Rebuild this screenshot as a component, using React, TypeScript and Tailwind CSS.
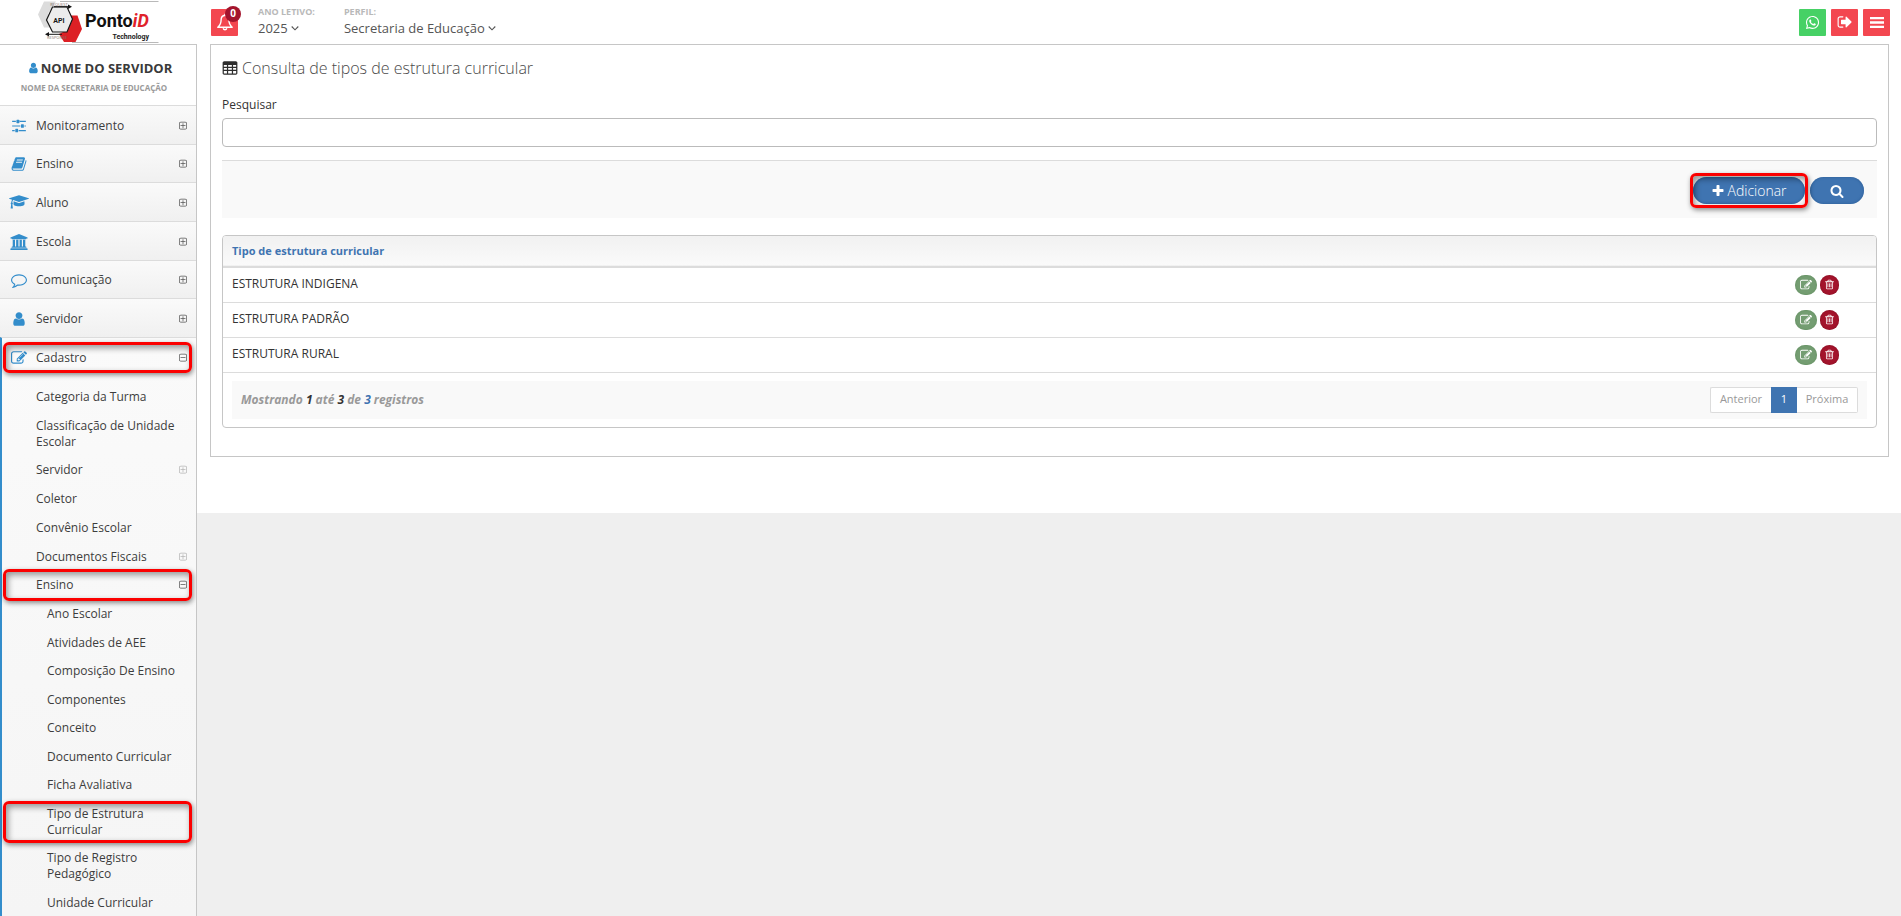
import { useState, type ReactNode } from "react";
import { FaWhatsapp } from "react-icons/fa";

const ICONS = {
  plusSquare: "M1344 800v64q0 14-9 23t-23 9h-352v352q0 14-9 23t-23 9h-64q-14 0-23-9t-9-23v-352h-352q-14 0-23-9t-9-23v-64q0-14 9-23t23-9h352v-352q0-14 9-23t23-9h64q14 0 23 9t9 23v352h352q14 0 23 9t9 23zm128 448v-832q0-66-47-113t-113-47h-832q-66 0-113 47t-47 113v832q0 66 47 113t113 47h832q66 0 113-47t47-113zm128-832v832q0 119-84.500 203.500t-203.500 84.500h-832q-119 0-203.500-84.500t-84.500-203.500v-832q0-119 84.500-203.500t203.500-84.500h832q119 0 203.500 84.500t84.500 203.500z",
  minusSquare: "M1344 800v64q0 14-9 23t-23 9h-832q-14 0-23-9t-9-23v-64q0-14 9-23t23-9h832q14 0 23 9t9 23zm128 448v-832q0-66-47-113t-113-47h-832q-66 0-113 47t-47 113v832q0 66 47 113t113 47h832q66 0 113-47t47-113zm128-832v832q0 119-84.500 203.500t-203.500 84.500h-832q-119 0-203.500-84.500t-84.500-203.500v-832q0-119 84.500-203.500t203.500-84.500h832q119 0 203.500 84.500t84.500 203.500z",
  user: "M1536 1399q0 109-62.500 187t-150.500 78h-854q-88 0-150.500-78t-62.500-187q0-85 8.500-160.500t31.500-152 58.500-131 94-89 134.500-34.500q131 128 313 128t313-128q76 0 134.500 34.500t94 89 58.500 131 31.500 152 8.500 160.500zm-256-887q0 159-112.500 271.500t-271.500 112.500-271.500-112.500-112.500-271.500 112.500-271.500 271.500-112.500 271.500 112.500 112.500 271.500z",
  edit: "M888 1184l116-116-152-152-116 116v56h96v96h56zm440-720q-16-16-33 1l-350 350q-17 17-1 33t33-1l350-350q17-17 1-33zm80 594v190q0 119-84.500 203.500t-203.500 84.500h-832q-119 0-203.500-84.500t-84.500-203.500v-832q0-119 84.500-203.500t203.500-84.500h832q63 0 117 25 15 7 18 23 3 17-9 29l-49 49q-14 14-32 8-23-6-45-6h-832q-66 0-113 47t-47 113v832q0 66 47 113t113 47h832q66 0 113-47t47-113v-126q0-13 9-22l64-64q15-15 35-7t20 29zm-96-738l288 288-672 672h-288v-288zm444 132l-92 92-288-288 92-92q28-28 68-28t68 28l152 152q28 28 28 68t-28 68z",
  trash: "M704 736v576q0 14-9 23t-23 9h-64q-14 0-23-9t-9-23v-576q0-14 9-23t23-9h64q14 0 23 9t9 23zm256 0v576q0 14-9 23t-23 9h-64q-14 0-23-9t-9-23v-576q0-14 9-23t23-9h64q14 0 23 9t9 23zm256 0v576q0 14-9 23t-23 9h-64q-14 0-23-9t-9-23v-576q0-14 9-23t23-9h64q14 0 23 9t9 23zm128 724v-948h-896v948q0 22 7 40.500t14.500 27 10.500 8.500h832q3 0 10.500-8.500t14.500-27 7-40.500zm-672-1076h448l-48-117q-7-9-17-11h-317q-10 2-17 11zm928 32v64q0 14-9 23t-23 9h-96v948q0 83-47 143.500t-113 60.500h-832q-66 0-113-58.500t-47-141.500v-952h-96q-14 0-23-9t-9-23v-64q0-14 9-23t23-9h309l70-167q15-37 54-63t79-26h320q40 0 79 26t54 63l70 167h309q14 0 23 9t9 23z",
  search: "M1216 832q0-185-131.500-316.500t-316.500-131.500-316.500 131.500-131.500 316.500 131.500 316.500 316.500 131.500 316.500-131.500 131.500-316.500zm512 832q0 52-38 90t-90 38q-54 0-90-38l-343-342q-179 124-399 124-143 0-273.500-55.500t-225-150-150-225-55.500-273.500 55.500-273.500 150-225 225-150 273.500-55.500 273.500 55.500 225 150 150 225 55.500 273.500q0 220-124 399l343 343q37 37 37 90z",
  plus: "M1600 736v192q0 40-28 68t-68 28h-416v416q0 40-28 68t-68 28h-192q-40 0-68-28t-28-68v-416h-416q-40 0-68-28t-28-68v-192q0-40 28-68t68-28h416v-416q0-40 28-68t68-28h192q40 0 68 28t28 68v416h416q40 0 68 28t28 68z",
  cap: "M1774 708l18 316q4 69-82 128t-235 93.500-323 34.500-323-34.500-235-93.500-82-128l18-316 574 181q22 7 48 7t48-7zm530-324q0 23-22 31l-1120 352q-4 1-10 1t-10-1l-652-206q-43 34-71 111.500t-34 178.500q63 36 63 109 0 69-58 107l58 433q2 14-8 25-9 11-24 11h-192q-15 0-24-11-10-11-8-25l58-433q-58-38-58-107 0-73 65-111 11-207 98-330l-333-104q-22-8-22-31t22-31l1120-352q4-1 10-1t10 1l1120 352q22 8 22 31z",
  exit: "M704 1440q0 4 1 20t.5 26.500-3 23.500-10 19.500-20.500 6.500h-320q-119 0-203.500-84.500t-84.500-203.500v-704q0-119 84.500-203.500t203.500-84.500h320q13 0 22.500 9.500t9.500 22.500q0 4 1 20t.5 26.500-3 23.500-10 19.500-20.500 6.500h-320q-66 0-113 47t-47 113v704q0 66 47 113t113 47h312l11.500 1 11.500 3 8 5.500 7 9 2 13.500zm928-544q0 26-19 45l-544 544q-19 19-45 19t-45-19-19-45v-288h-448q-26 0-45-19t-19-45v-384q0-26 19-45t45-19h448v-288q0-26 19-45t45-19 45 19l544 544q19 19 19 45z",
  comment: "M896 384q-204 0-381.500 69.500t-282 187.500-104.500 255q0 112 71.500 213.500t201.500 175.500l87 50-27 96q-24 91-70 172 152-63 275-171l43-38 57 6q69 8 130 8 204 0 381.500-69.500t282-187.500 104.500-255-104.500-255-282-187.500-381.500-69.500zm896 512q0 174-120 321.500t-326 233-450 85.500q-70 0-145-8-198 175-460 242-49 14-114 22h-5q-15 0-27-10.500t-16-27.500v-1q-3-4-.5-12t2-10 4.500-9.500l6-9 7-8.500 8-9q7-8 31-34.500t34.500-38 31-39.500 32.500-51 27-59 26-76q-157-89-247.500-220t-90.500-281q0-174 120-321.500t326-233 450-85.500 450 85.500 326 233 120 321.500z",
  book: "M1703 478q40 57 18 129l-275 906q-19 64-76.500 107.500t-122.500 43.500h-923q-77 0-148.500-53.500t-99.500-131.500q-24-67-2-127 0-4 3-27t4-37q1-8-3-21.500t-3-19.500q2-11 8-21t16.500-23.500 16.500-23.500q23-38 45-91.500t30-91.500q3-10 .5-30t-.5-28q3-11 17-28t17-23q21-36 42-92t25-90q1-9-2.500-32t.5-28q4-13 22-30.500t22-22.500q19-26 42.500-84.500t27.500-96.500q1-8-3-25.500t-2-26.500q2-8 9-18t18-23 17-21q8-12 16.500-30.500t15-35 16-36 19.500-32 26.500-23.500 36-11.500 47.500 5.500l-1 3q38-9 51-9h761q74 0 114 56t18 130l-274 906q-36 119-71.500 153.500t-128.500 34.500h-869q-27 0-38 15-11 16-1 43 24 70 144 70h923q29 0 56-15.500t35-41.500l300-987q7-22 5-57 38 15 59 43zm-1064 2q-4 13 2 22.500t20 9.500h608q13 0 25.500-9.500t16.500-22.500l21-64q4-13-2-22.500t-20-9.500h-608q-13 0-25.500 9.500t-16.500 22.500zm-83 256q-4 13 2 22.500t20 9.500h608q13 0 25.500-9.500t16.500-22.500l21-64q4-13-2-22.500t-20-9.500h-608q-13 0-25.500 9.500t-16.500 22.500z",
  university: "M960 0l960 384v128h-128q0 26-20.500 45t-48.500 19h-1526q-28 0-48.500-19t-20.500-45h-128v-128zm-704 640h256v768h128v-768h256v768h128v-768h256v768h128v-768h256v768h59q28 0 48.500 19t20.500 45v64h-1664v-64q0-26 20.500-45t48.500-19h59v-768zm1595 960q28 0 48.500 19t20.500 45v128h-1920v-128q0-26 20.500-45t48.500-19h1782z",
  sliders: "M128 320h416v128h-416zM704 256h256v256h-256v-256zM608 256q0-64 64-64h192q64 0 64 64v256q0 64-64 64h-192q-64 0-64-64zM992 320h672v128h-672zM128 832h928v128h-928zM1120 768q0-64 64-64h192q64 0 64 64v256q0 64-64 64h-192q-64 0-64-64zM1504 832h160v128h-160zM128 1344h288v128h-288zM480 1280q0-64 64-64h192q64 0 64 64v256q0 64-64 64h-192q-64 0-64-64zM864 1344h800v128h-800z",
  table: "M288 128h1216q66 0 113 47t47 113v1088q0 66-47 113t-113 47h-1216q-66 0-113-47t-47-113v-1088q0-66 47-113t113-47zM256 512v192h320v-192zM704 512v192h384v-192zM1216 512v192h320v-192zM256 832v192h320v-192zM704 832v192h384v-192zM1216 832v192h320v-192zM256 1152v256h320v-256zM704 1152v256h384v-256zM1216 1152v256h320v-256z",
};

type IconName = keyof typeof ICONS;

function Icon({ name, className, box = "0 0 1792 1792" }: { name: IconName; className: string; box?: string }) {
  return (
    <svg
      viewBox={box}
      className={`shrink-0 ${className}`}
      fill="currentColor"
      fillRule={name === "sliders" ? "nonzero" : "evenodd"}
      aria-hidden="true"
    >
      <path d={ICONS[name]} />
    </svg>
  );
}

function BellIcon() {
  return (
    <svg viewBox="0 0 18 18" className="size-[18px]" fill="none" stroke="currentColor" strokeWidth="1.4" strokeLinejoin="round" aria-hidden="true">
      <path d="M9 2.300c-2.600.3-3.900 2.200-3.900 4.700 0 3.400-1.200 5.500-3.300 7.200h14.400c-2.100-1.700-3.300-3.800-3.300-7.200 0-2.500-1.300-4.400-3.900-4.700z" />
      <path d="M9 .8v1.400M7.200 15.200c.3 1 .9 1.500 1.800 1.500s1.500-.5 1.800-1.500" />
    </svg>
  );
}

function AngleDown() {
  return (
    <svg viewBox="0 0 8 8" className="size-2" fill="none" stroke="currentColor" strokeWidth="1.100" aria-hidden="true">
      <path d="M.7 2.500L4 5.800l3.300-3.300" />
    </svg>
  );
}

function Logo() {
  return (
    <svg viewBox="0 0 122 44" className="h-11 w-[122px]" role="img" aria-label="PontoiD Technology">
      <path d="M22 1.500h98.500M34 42.500h86.500" stroke="#b9b9b9" strokeWidth="1" />
      <path d="M6 1.500h12l-8 12 8 12-3 2H6L0 14.500z" fill="#dcdcdc" />
      <path d="M32 15.500h7.500L44 29l-6.500 13H26l-5-8 4-2 4-1.500 5-10z" fill="#dd2025" />
      <path d="M14.500 7h14.500l5.500 12-5.500 13H14.500L8.500 20z" fill="#ececec" stroke="#161616" strokeWidth="1.200" />
      <path d="M16 6.700h14M10 34.300h14" stroke="#161616" strokeWidth="1" />
      <path d="M30 4.500l4 2.200-4 2.200zM11 32l-4 2.300 4 2.200z" fill="#161616" />
      <text x="21" y="22.500" textAnchor="middle" fontSize="7" fontWeight="700" fill="#161616" className="font-[Roboto,sans-serif]">API</text>
      <text x="21" y="5.500" textAnchor="middle" fontSize="4" fill="#85726a" className="font-['Open_Sans',sans-serif]">REQUEST</text>
      <text x="19" y="38.500" textAnchor="middle" fontSize="4" fill="#85726a" className="font-['Open_Sans',sans-serif]">RESPONSE</text>
      <text x="47" y="27" fontSize="18" fontWeight="700" fill="#111" className="font-[Roboto,sans-serif]">
        Ponto<tspan fill="#e0222a" fontStyle="italic">iD</tspan>
      </text>
      <text x="111" y="39" textAnchor="end" fontSize="7" fontWeight="700" fill="#222" className="font-[Roboto,sans-serif]">Technology</text>
    </svg>
  );
}

/* Red frame drawn over an item to call attention to it */
function Highlight({ className }: { className: string }) {
  return (
    <span
      aria-hidden="true"
      className={`pointer-events-none absolute z-10 rounded-[6px] border-3 border-[#fb0000] shadow-[1px_2px_5px_rgba(0,0,0,0.45),inset_2px_3px_6px_rgba(0,0,0,0.4)] ${className}`}
    />
  );
}

const SECTIONS: { label: string; icon: IconName; iconClass: string; box?: string }[] = [
  { label: "Monitoramento", icon: "sliders", iconClass: "size-4" },
  { label: "Ensino", icon: "book", iconClass: "size-4" },
  { label: "Aluno", icon: "cap", iconClass: "h-4 w-5", box: "0 0 2304 1792" },
  { label: "Escola", icon: "university", iconClass: "h-4 w-[18px]", box: "0 0 1920 1792" },
  { label: "Comunicação", icon: "comment", iconClass: "size-4" },
  { label: "Servidor", icon: "user", iconClass: "size-4" },
];

const CADASTRO = [
  { label: "Categoria da Turma" },
  { label: "Classificação de Unidade Escolar" },
  { label: "Servidor", more: true },
  { label: "Coletor" },
  { label: "Convênio Escolar" },
  { label: "Documentos Fiscais", more: true },
];

const ENSINO = [
  "Ano Escolar",
  "Atividades de AEE",
  "Composição De Ensino",
  "Componentes",
  "Conceito",
  "Documento Curricular",
  "Ficha Avaliativa",
  "Tipo de Estrutura Curricular",
  "Tipo de Registro Pedagógico",
  "Unidade Curricular",
];

function Sidebar() {
  return (
    <aside className="flex w-[197px] shrink-0 flex-col overflow-hidden border-t border-r border-[#c6c6c6] bg-[#f7f7f7] text-[12px] text-[#3d3d3d]">
      <div className="flex h-[60px] shrink-0 flex-col items-center justify-center gap-1 bg-white pt-[6px]">
        <p className="flex items-center gap-[3px] pl-1 text-[13px] leading-4 font-bold text-[#3a3a3a]">
          <Icon name="user" className="h-3 w-[10px] text-[#338dcb]" box="128 0 1408 1792" />
          NOME DO SERVIDOR
        </p>
        <p className="pr-2 text-[8px] leading-4 font-bold text-[#9a9a9a]">NOME DA SECRETARIA DE EDUCAÇÃO</p>
      </div>
      <nav>
        <ul className="grid min-h-[232px] auto-rows-fr">
          {SECTIONS.map((s) => (
            <li key={s.label} className="border-t border-[#dcdcdc] bg-linear-to-b from-[#fafafa] to-[#f0f0f0]">
              <a href="#" className="flex h-full items-center pt-[2px] pr-2">
                <span className="flex w-9 items-center justify-center pl-[2px] text-[#338dcb]">
                  <Icon name={s.icon} className={s.iconClass} box={s.box} />
                </span>
                <span className="grow">{s.label}</span>
                <Icon name="plusSquare" className="size-[10px] text-[#555]" />
              </a>
            </li>
          ))}
        </ul>
        <div className="border-t border-l-2 border-t-[#dcdcdc] border-l-[#338dcb] bg-linear-to-b from-[#fafafa] to-[#f5f5f5]">
          <a href="#" className="relative flex h-[39px] items-center pr-2">
            <span className="flex w-[34px] items-center justify-center pr-px text-[#338dcb]">
              <Icon name="edit" className="size-4" />
            </span>
            <span className="grow">Cadastro</span>
            <Icon name="minusSquare" className="size-[10px] text-[#555]" />
            <Highlight className="top-1 right-1 bottom-1 left-px" />
          </a>
          <ul className="flex min-h-[223px] flex-col pt-[6px] leading-4">
            {CADASTRO.map((c) => (
              <li key={c.label} className="grow">
                <a href="#" className="flex items-center py-[6px] pr-2 pl-[34px]">
                  <span className="grow">{c.label}</span>
                  {c.more && <Icon name="plusSquare" className="size-[10px] text-[#b5b5b5]" />}
                </a>
              </li>
            ))}
            <li className="grow">
              <a href="#" className="relative flex items-center py-[6px] pr-2 pl-[34px]">
                <span className="grow">Ensino</span>
                <Icon name="minusSquare" className="size-[10px] text-[#555]" />
                <Highlight className="-inset-y-[2px] right-1 left-px" />
              </a>
            </li>
          </ul>
          <ul className="flex min-h-[317px] flex-col leading-4">
            {ENSINO.map((label) => (
              <li key={label} className="grow">
                <a href="#" className="relative flex py-[6px] pr-4 pl-[45px]">
                  {label}
                  {label === "Tipo de Estrutura Curricular" && <Highlight className="inset-y-[1px] right-1 left-px" />}
                </a>
              </li>
            ))}
          </ul>
        </div>
      </nav>
    </aside>
  );
}

function HeaderMenu({ label, value }: { label: string; value: string }) {
  return (
    <div>
      <p className="text-[9px] leading-4 font-bold text-[#b9b9b9]">{label}</p>
      <button type="button" className="flex items-center gap-[3px] text-[13px] leading-4 text-[#555]">
        {value}
        <AngleDown />
      </button>
    </div>
  );
}

function SquareButton({ label, className, children }: { label: string; className: string; children: ReactNode }) {
  return (
    <button type="button" aria-label={label} className={`flex size-[27px] items-center justify-center rounded-[1px] text-white ${className}`}>
      {children}
    </button>
  );
}

function Header() {
  return (
    <header className="flex h-11 shrink-0 items-center bg-white pr-[11px]">
      <div className="flex w-[197px] shrink-0 justify-center">
        <Logo />
      </div>
      <div className="relative ml-[14px]">
        <SquareButton label="Notificações" className="bg-[#f34750]">
          <BellIcon />
        </SquareButton>
        <span className="absolute -top-[3px] -right-[3px] flex size-4 items-center justify-center rounded-full bg-[#a3142c] text-[10px] font-bold text-white">0</span>
      </div>
      <div className="ml-5 flex gap-[29px] pb-1">
        <HeaderMenu label="ANO LETIVO:" value="2025" />
        <HeaderMenu label="PERFIL:" value="Secretaria de Educação" />
      </div>
      <div className="ml-auto flex gap-[5px]">
        <SquareButton label="WhatsApp" className="bg-[#46d165]">
          <FaWhatsapp className="size-[15px]" />
        </SquareButton>
        <SquareButton label="Sair" className="bg-[#f34750]">
          <Icon name="exit" className="size-4" />
        </SquareButton>
        <SquareButton label="Menu" className="bg-[#f34750]">
          <svg viewBox="0 0 14 11" className="h-[11px] w-[14px]" fill="currentColor" aria-hidden="true">
            <path d="M0 0h14v2.300H0zM0 4.350h14v2.300H0zM0 8.700h14V11H0z" />
          </svg>
        </SquareButton>
      </div>
    </header>
  );
}

const ROWS = ["ESTRUTURA INDIGENA", "ESTRUTURA PADRÃO", "ESTRUTURA RURAL"];

function Results() {
  return (
    <div className="mt-[17px] overflow-hidden rounded-[4px] border border-[#c6c6c6]">
      <table className="w-full text-left text-[12px]">
        <thead>
          <tr className="h-[31px] border-b-2 border-[#dcdcdc] bg-linear-to-b from-[#f1f1f1] to-[#fafafa]">
            <th className="px-[9px] text-[11px] font-bold text-[#3f74b1]">Tipo de estrutura curricular</th>
            <th className="w-[90px]" aria-label="Ações" />
          </tr>
        </thead>
        <tbody>
          {ROWS.map((row) => (
            <tr key={row} className="h-[35px] border-b border-[#dcdcdc]">
              <td className="px-[9px] pb-[2px] text-[#333]">{row}</td>
              <td>
                <div className="flex items-center gap-[3px] pl-[9px]">
                  <button type="button" aria-label={`Editar ${row}`} className="flex h-5 w-[22px] items-center justify-center rounded-full bg-[#749d72] text-white shadow-[inset_0_0_2px_#5c8a5a]">
                    <Icon name="edit" className="size-[12px]" />
                  </button>
                  <button type="button" aria-label={`Excluir ${row}`} className="flex h-5 w-[19px] items-center justify-center rounded-full bg-[#a3142c] text-white shadow-[inset_0_0_2px_#800d20]">
                    <Icon name="trash" className="size-[11px]" />
                  </button>
                </div>
              </td>
            </tr>
          ))}
        </tbody>
      </table>
      <div className="mx-[9px] my-2 flex h-[38px] items-center justify-between bg-[#f9f9f9] px-[9px]">
        <p className="text-[12px] font-bold text-[#999] italic">
          Mostrando <span className="text-[#333]">1</span> até <span className="text-[#333]">3</span> de <span className="text-[#3f74b1]">3</span> registros
        </p>
        <div className="flex h-[26px] text-[11px] text-[#999]">
          <button type="button" className="w-[61px] rounded-l-[2px] border border-r-0 border-[#dcdcdc] bg-white">Anterior</button>
          <button type="button" className="w-[26px] bg-[#3f74b1] text-white">1</button>
          <button type="button" className="w-[61px] rounded-r-[2px] border border-l-0 border-[#dcdcdc] bg-white">Próxima</button>
        </div>
      </div>
    </div>
  );
}

export default function App() {
  const [query, setQuery] = useState("");
  return (
    <div className="flex h-screen flex-col bg-[#efefef] font-['Open_Sans','Noto_Sans',sans-serif]">
      <Header />
      <div className="flex min-h-0 grow">
        <Sidebar />
        <div className="min-w-0 grow">
          <div className="bg-white pr-3 pb-14 pl-[13px]">
            <main className="border border-[#c6c6c6] px-[11px] pb-7">
              <h1 className="flex items-center gap-1 pt-[11px] text-[16px] leading-6 font-light text-[#4a4a4a]">
                <Icon name="table" className="size-4 text-[#2d2d2d]" box="64 0 1664 1664" />
                Consulta de tipos de estrutura curricular
              </h1>
              <label htmlFor="pesquisar" className="mt-[17px] block text-[12px] leading-4 text-[#333]">
                Pesquisar
              </label>
              <input
                id="pesquisar"
                type="text"
                value={query}
                onChange={(e) => setQuery(e.target.value)}
                className="mt-[5px] block h-[29px] w-full rounded-[4px] border border-[#bbb] bg-white px-2 text-[12px] outline-none"
              />
              <div className="mt-[13px] flex h-[58px] items-center justify-end gap-[5px] border-t border-[#dcdcdc] bg-[#f9f9f9] pt-[2px] pr-[13px]">
                <div className="relative">
                  <button type="button" className="flex h-[27px] w-[112px] items-center justify-center gap-[2px] rounded-full bg-[#3f74b1] text-[14px] font-light text-white shadow-[inset_0_0_3px_#2b5c95]">
                    <Icon name="plus" className="size-[14px]" />
                    Adicionar
                  </button>
                  <Highlight className="-inset-x-[3px] -inset-y-1" />
                </div>
                <button type="button" aria-label="Buscar" className="flex h-[27px] w-[54px] items-center justify-center rounded-full bg-[#3f74b1] text-white shadow-[inset_0_0_3px_#2b5c95]">
                  <Icon name="search" className="size-[14px]" />
                </button>
              </div>
              <Results />
            </main>
          </div>
        </div>
      </div>
    </div>
  );
}
